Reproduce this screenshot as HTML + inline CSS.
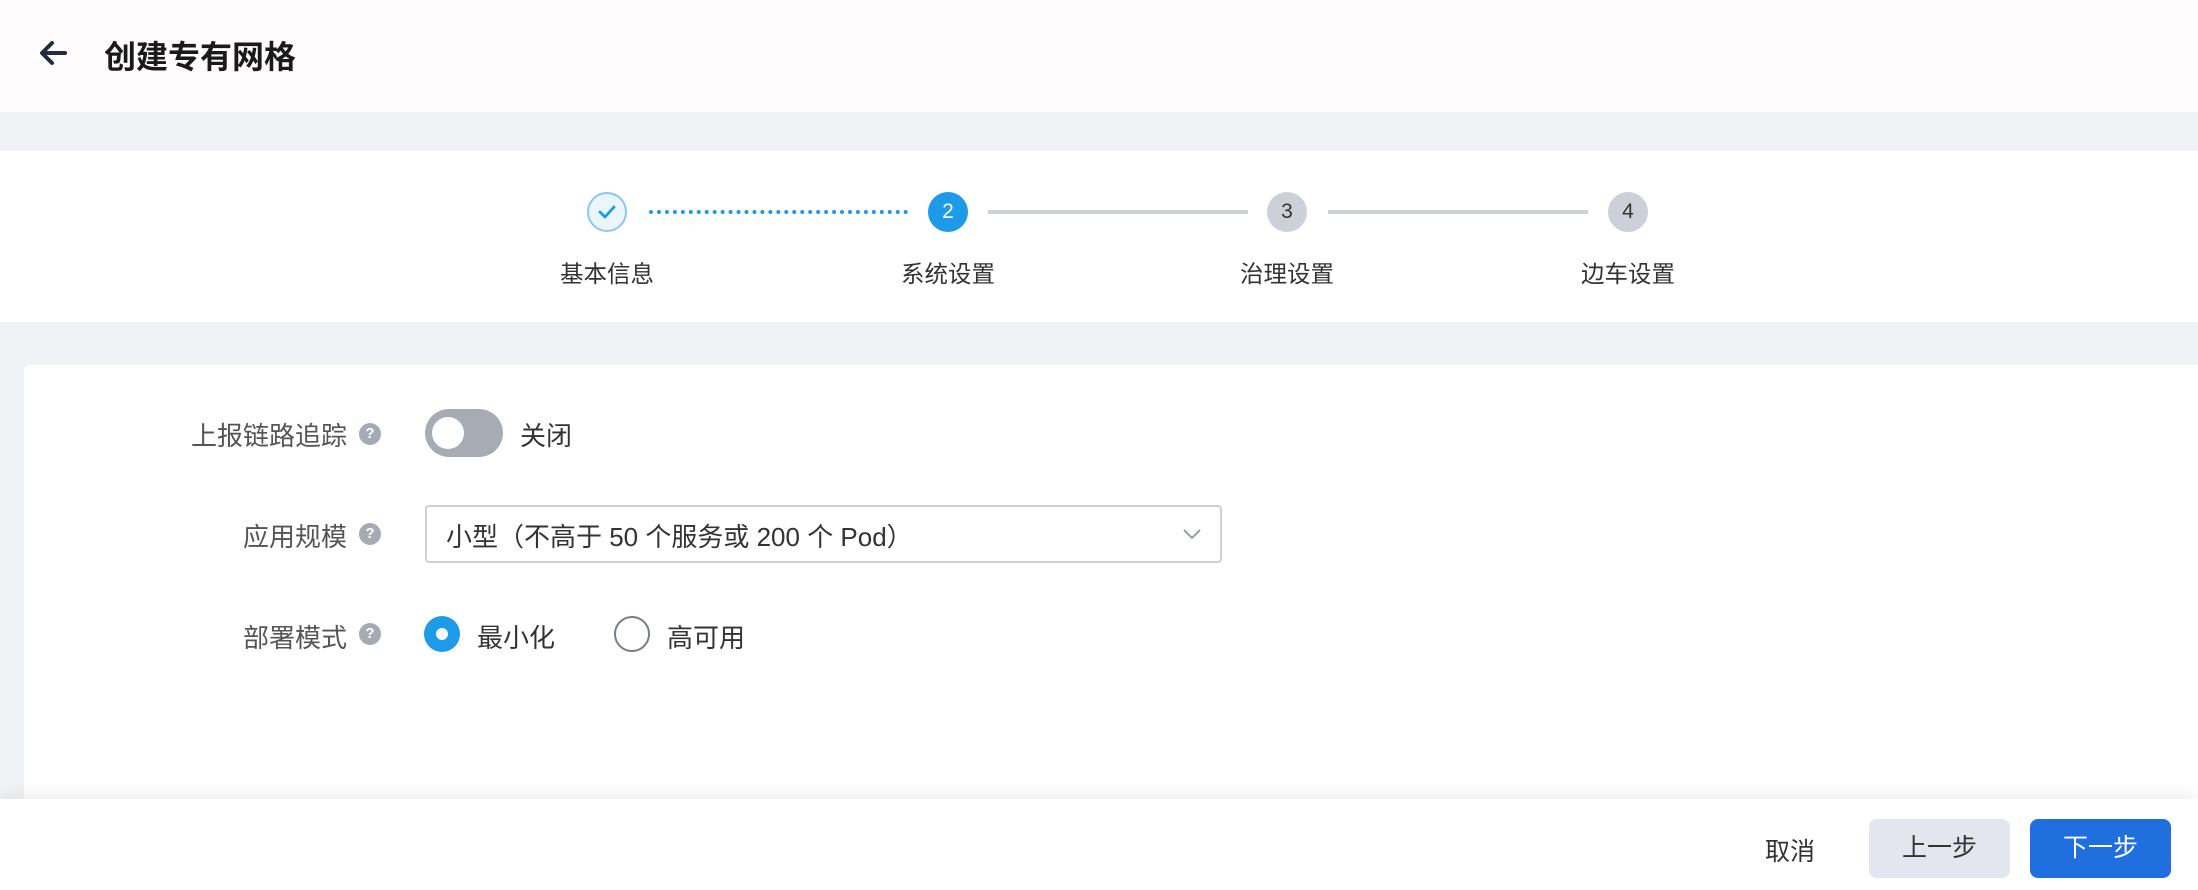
<!DOCTYPE html>
<html><head><meta charset="utf-8"><style>
*{margin:0;padding:0;box-sizing:border-box}
body{width:2198px;height:890px;overflow:hidden;background:#f1f2f5;font-family:"Liberation Sans","Noto Sans CJK SC",sans-serif;position:relative;color:#333}
.abs{position:absolute}
.hdr{left:0;top:0;width:2198px;height:112px;background:#fffcfd}
.title{left:104px;top:32px;font-size:32px;font-weight:bold;color:#1a1a1a}
.steps{left:0;top:151px;width:2198px;height:171px;background:#fff}
.c{width:40px;height:40px;border-radius:50%;top:192px;font-size:21px;text-align:center;line-height:40px}
.lbl{top:255px;font-size:23.5px;color:#333;width:140px;text-align:center}
.card{left:24px;top:365px;width:2174px;height:440px;background:#fff;border-radius:6px 0 0 0}
.fl{font-size:26px;color:#555;text-align:right;width:250px;left:97px}
.q{width:22px;height:22px;border-radius:50%;background:#a6abb3;color:#fff;font-size:15px;font-weight:bold;text-align:center;line-height:22px;left:359px}
.t{font-size:26px;color:#333}
.footer{left:0;top:799px;width:2198px;height:91px;background:#fff;box-shadow:0 -6px 14px rgba(0,0,0,.06)}
.btn{top:819px;width:141px;height:59px;border-radius:8px;font-size:25px;text-align:center;line-height:59px}
</style></head><body>
<div class="abs hdr"></div>
<svg class="abs" style="left:38px;top:40px" width="30" height="26" viewBox="0 0 30 26"><path d="M27 13H5M14 3L4 13l10 10" stroke="#1f2d3d" stroke-width="4" fill="none" stroke-linecap="round" stroke-linejoin="round"/></svg>
<div class="abs title">创建专有网格</div>
<div class="abs steps"></div>
<div class="abs c" style="left:587px;background:#eaf5fd;border:2px solid #8cc7f2"><svg width="36" height="36" viewBox="0 0 36 36" style="display:block"><path d="M11 18l5 5 9-10" stroke="#1d9be8" stroke-width="2.8" fill="none" stroke-linecap="round" stroke-linejoin="round"/></svg></div>
<div class="abs" style="left:649px;top:210px;width:259px;border-top:4px dotted #1d9be8"></div>
<div class="abs c" style="left:928px;background:#1d9be8;color:#fff">2</div>
<div class="abs" style="left:988px;top:210px;width:260px;height:4px;background:#cdd0d8"></div>
<div class="abs c" style="left:1267px;background:#cdd0d8;color:#333">3</div>
<div class="abs" style="left:1328px;top:210px;width:260px;height:4px;background:#cdd0d8"></div>
<div class="abs c" style="left:1608px;background:#cdd0d8;color:#333">4</div>
<div class="abs lbl" style="left:537px">基本信息</div>
<div class="abs lbl" style="left:878px">系统设置</div>
<div class="abs lbl" style="left:1217px">治理设置</div>
<div class="abs lbl" style="left:1558px">边车设置</div>
<div class="abs card"></div>
<div class="abs fl" style="top:416px">上报链路追踪</div>
<div class="abs q" style="top:423px">?</div>
<div class="abs" style="left:425px;top:409px;width:78px;height:48px;border-radius:24px;background:#a7acb4"><div style="position:absolute;left:7px;top:8px;width:32px;height:32px;border-radius:50%;background:#fff"></div></div>
<div class="abs t" style="left:520px;top:416px">关闭</div>
<div class="abs fl" style="top:517px">应用规模</div>
<div class="abs q" style="top:523px">?</div>
<div class="abs" style="left:425px;top:505px;width:797px;height:58px;border:2px solid #cdd0d8;border-radius:4px"></div>
<div class="abs t" style="left:446px;top:517px">小型（不高于 50 个服务或 200 个 Pod）</div>
<svg class="abs" style="left:1182px;top:528px" width="20" height="12" viewBox="0 0 20 12"><path d="M2 2l8 8 8-8" stroke="#9aa0a8" stroke-width="2" fill="none"/></svg>
<div class="abs fl" style="top:618px">部署模式</div>
<div class="abs q" style="top:623px">?</div>
<div class="abs" style="left:424px;top:616px;width:36px;height:36px;border-radius:50%;background:#1d9be8"><div style="position:absolute;left:12px;top:12px;width:12px;height:12px;border-radius:50%;background:#fff"></div></div>
<div class="abs t" style="left:477px;top:618px">最小化</div>
<div class="abs" style="left:614px;top:616px;width:36px;height:36px;border-radius:50%;border:2px solid #777d86;background:#fff"></div>
<div class="abs t" style="left:667px;top:618px">高可用</div>
<div class="abs footer"></div>
<div class="abs" style="left:1765px;top:832px;font-size:25px;color:#333">取消</div>
<div class="abs btn" style="left:1869px;background:#e3e6ee;color:#333">上一步</div>
<div class="abs btn" style="left:2030px;background:#1f6fde;color:#fff">下一步</div>
</body></html>
